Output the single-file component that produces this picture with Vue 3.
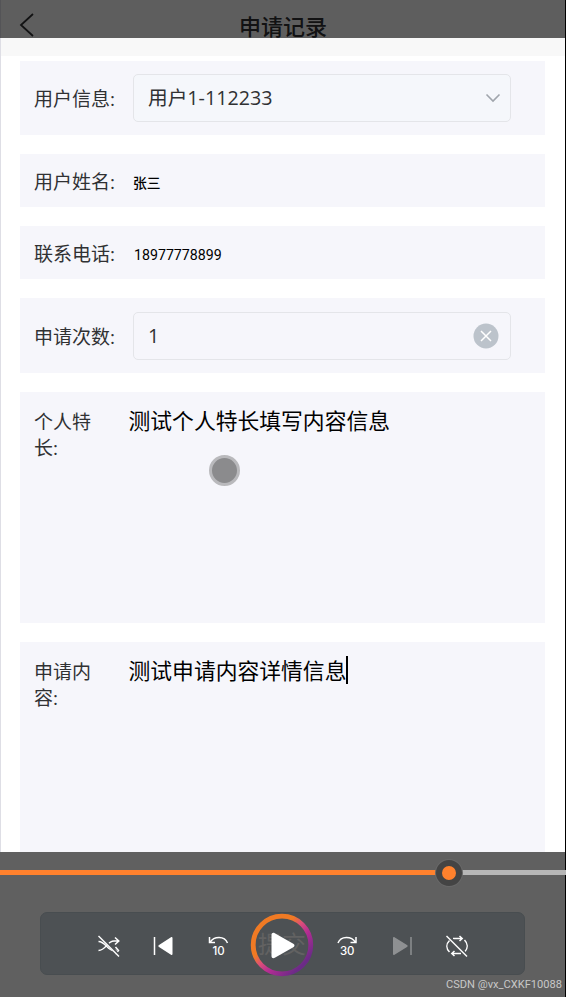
<script setup>
import { ref } from "vue";

const user = ref("用户1-112233");
const count = ref("1");
const speciality = ref("测试个人特长填写内容信息");
const content = ref("测试申请内容详情信息");

const infoRows = [
  { label: "用户姓名:", value: "张三", type: "name" },
  { label: "联系电话:", value: "18977778899", type: "phone" },
];

const progress = ref(79.4);
</script>

<template>
  <div class="screen">
    <div class="page">
      <header class="nav">
        <svg class="nav-back" width="16" height="26" viewBox="0 0 16 26">
          <path d="M14 2 2 13l12 11" />
        </svg>
        <h1 class="nav-title">申请记录</h1>
      </header>

      <main class="form">
        <section class="card card-field">
          <label class="label">用户信息:</label>
          <div class="control control-select">
            <span class="control-text">{{ user }}</span>
            <svg class="arrow" width="16" height="10" viewBox="0 0 16 10">
              <path d="m1.5 1.5 6.5 6.5 6.5-6.5" />
            </svg>
          </div>
        </section>

        <section
          v-for="row in infoRows"
          :key="row.label"
          class="card card-info"
        >
          <label class="label">{{ row.label }}</label>
          <span class="value" :class="`value-${row.type}`">{{
            row.value
          }}</span>
        </section>

        <section class="card card-field card-count">
          <label class="label">申请次数:</label>
          <div class="control">
            <span class="control-text">{{ count }}</span>
            <svg class="clear" width="26" height="26" viewBox="0 0 26 26">
              <circle cx="13" cy="13" r="12.5" />
              <path d="m8 8 10 10M18 8 8 18" />
            </svg>
          </div>
        </section>

        <section class="card card-area">
          <label class="label label-area">个人特长:</label>
          <p class="area-text">{{ speciality }}</p>
        </section>

        <section class="card card-area">
          <label class="label label-area">申请内容:</label>
          <p class="area-text">{{ content }}<i class="caret"></i></p>
        </section>
      </main>
    </div>

    <div class="pointer"></div>
    <div class="shade-top"></div>

    <div class="player">
      <div class="progress">
        <div class="progress-done" :style="{ width: progress + '%' }"></div>
        <div class="progress-knob" :style="{ left: progress + '%' }"></div>
      </div>

      <div class="panel">
        <span class="submit">提交</span>

        <svg class="icon" width="24" height="24" viewBox="0 0 24 24">
          <path
            d="M1.5 7.5c7 0 9 9 15 9h3M1.5 16.5C9 16.5 10 7 17 7h4.5M18 3.5 21.8 7 18 10.5M18.5 13l3 3.5-3 3.5"
          />
          <path d="m3 2 19.5 20" class="gap" />
          <path d="m1.5 2 20.5 20.5" />
        </svg>

        <svg class="icon" width="24" height="24" viewBox="0 0 24 24">
          <path d="M2.5 3v18" />
          <path
            class="solid"
            d="M20.5 4v16c0 1-.8 1.2-1.5.7L7 13c-.9-.6-.9-1.4 0-2L19 3.3c.7-.5 1.5-.3 1.5.7z"
          />
        </svg>

        <svg class="icon icon-skip" width="24" height="24" viewBox="0 0 24 24">
          <path d="M2.5 3v5.5H8M3 8.3C7 2 17.5 1.5 20.5 9" />
          <text x="11.5" y="21">10</text>
        </svg>

        <svg class="play" width="64" height="64" viewBox="0 0 64 64">
          <defs>
            <linearGradient id="ring" x1="0.1" y1="0.1" x2="0.85" y2="0.85">
              <stop offset="0.35" stop-color="#f07a24" />
              <stop offset="0.5" stop-color="#dc4f78" />
              <stop offset="0.68" stop-color="#b42c93" />
              <stop offset="1" stop-color="#6b2b87" />
            </linearGradient>
          </defs>
          <circle cx="32" cy="32" r="28.8" />
          <path
            d="M21.5 22v21c0 2 1.6 2.8 3.3 1.8l18.5-10.5c1.6-1 1.6-2.6 0-3.6L24.8 20.2c-1.7-1-3.3-.2-3.3 1.8z"
          />
        </svg>

        <svg class="icon" width="24" height="24" viewBox="0 0 24 24">
          <path d="M21 3v5.5h-5.5M20.5 8.3C16.5 2 6 1.5 3 9" />
          <text x="12.2" y="21">30</text>
        </svg>

        <svg class="icon icon-off" width="24" height="24" viewBox="0 0 24 24">
          <path d="M21 3v18" />
          <path
            class="solid"
            d="M3 4v16c0 1 .8 1.2 1.5.7L17 13c.9-.6.9-1.4 0-2L4.5 3.3c-.7-.5-1.5-.3-1.5.7z"
          />
        </svg>

        <svg class="icon" width="24" height="24" viewBox="0 0 24 24">
          <path
            d="M8 4.5h9M14.5 2 17.2 4.5 14.5 7M16 19.5H7M9.5 17 6.8 19.5 9.5 22M4.5 6.5C1 10 1 14.5 4.5 18M19.5 6c3.5 3.5 3.5 8 .5 11.5"
          />
          <path d="m3 2 19.5 20" class="gap" />
          <path d="m1.5 2 20.5 20.5" />
        </svg>
      </div>

      <span class="watermark">CSDN @vx_CXKF10088</span>
    </div>
  </div>
</template>

<style>
body {
  background: #fff;
}
</style>

<style scoped>
.screen {
  position: relative;
  width: 566px;
  height: 997px;
  overflow: hidden;
  font-family: "Open Sans", "Noto Sans CJK SC", sans-serif;
  color: #303133;
}

.page {
  box-sizing: border-box;
  height: 100%;
  overflow: hidden;
  border-left: 1px solid #dedee5;
  border-right: 1px solid #000;
  background: #fff;
}

.nav {
  display: flex;
  align-items: center;
  height: 56px;
  padding: 0 18px;
  background: #f8f8f8;
}

.nav-back {
  flex: none;
  margin-top: -7px;
}

.nav-back path {
  fill: none;
  stroke: #303133;
  stroke-width: 1.8;
}

.nav-title {
  flex: 1;
  margin: -4px 16px 0 0;
  font-size: 22px;
  line-height: 30px;
  font-weight: 500;
  text-align: center;
  color: #303133;
}

.form {
  display: flex;
  flex-direction: column;
  gap: 19px;
  padding: 4.5px 20.5px 0 19.4px;
}

.card {
  display: flex;
  align-items: center;
  flex: none;
  box-sizing: border-box;
  padding: 0 34px 0 13.6px;
  background: #f6f6fb;
}

.card-field {
  height: 74.5px;
}

.card-count {
  padding-top: 1px;
}

.card-info {
  height: 53px;
}

.card-area {
  align-items: flex-start;
  height: 231px;
  padding: 17px 14px 0 13.6px;
}

.label {
  flex: none;
  width: 99px;
  font-size: 19px;
  line-height: 26px;
  white-space: nowrap;
}

.card-field .label,
.card-info .label {
  padding-top: 2px;
}

.label-area {
  width: 62px;
  margin-right: 32.5px;
  white-space: normal;
}

.control {
  display: flex;
  flex: 1;
  align-items: center;
  justify-content: space-between;
  box-sizing: border-box;
  height: 48px;
  padding: 0 11px 0 14px;
  border: 1.5px solid #e4e5e9;
  border-radius: 5px;
}

.control-select {
  padding-right: 9px;
  background: #f5f7fb;
}

.control-text {
  font-size: 19.7px;
}

.control-select .control-text {
  margin-top: -3px;
}

.arrow path {
  fill: none;
  stroke: #a0a5ac;
  stroke-width: 1.6;
}

.clear circle {
  fill: #bcc3cb;
}

.clear path {
  stroke: #fff;
  stroke-width: 1.5;
}

.value {
  color: #000;
}

.value-name {
  padding-top: 3px;
  font-size: 13.8px;
  font-weight: 500;
}

.value-phone {
  padding: 5px 0 0 1px;
  font-family: Roboto, sans-serif;
  font-size: 14.2px;
}

.area-text {
  display: flex;
  align-items: center;
  margin: -3px 0 0;
  font-size: 21.8px;
  line-height: 30px;
  white-space: nowrap;
  color: #000;
}

.caret {
  width: 2px;
  height: 28px;
  margin-top: -2px;
  background: #000;
}

.pointer {
  position: absolute;
  top: 455px;
  left: 209px;
  box-sizing: border-box;
  width: 31px;
  height: 31px;
  border: 3px solid #b9b9bc;
  border-radius: 50%;
  background: #8b8b8d;
}

.shade-top {
  position: absolute;
  top: 0;
  left: 0;
  width: 565px;
  height: 38px;
  background: rgba(0, 0, 0, 0.62);
}

.player {
  position: absolute;
  top: 852px;
  left: 0;
  box-sizing: border-box;
  width: 566px;
  height: 145px;
  background: linear-gradient(to left, #000 1px, #606060 1px);
}

.progress {
  position: relative;
  height: 5px;
  margin-top: 18px;
  background: #b7b7b7;
}

.progress-done {
  height: 100%;
  background: #ff812d;
}

.progress-knob {
  position: absolute;
  top: 2.5px;
  box-sizing: border-box;
  width: 26px;
  height: 26px;
  border: 6.5px solid #444;
  border-radius: 50%;
  background: #ff812d;
  box-shadow: 0 0 0 1px #686868;
  transform: translate(-50%, -50%);
}

.panel {
  position: relative;
  display: flex;
  align-items: center;
  box-sizing: border-box;
  width: 485px;
  height: 63px;
  margin: 37px 0 0 40px;
  padding-left: 56px;
  border: 1px solid #484d50;
  border-radius: 7px;
  background: #4d5154;
}

.submit {
  position: absolute;
  top: 14px;
  left: 217px;
  font-size: 24px;
  line-height: 34px;
  color: #626262;
}

.icon {
  flex: none;
  margin-top: 5px;
  margin-right: 31px;
}

.icon-skip {
  margin-right: 19px;
}

.icon path {
  fill: none;
  stroke: #fff;
  stroke-width: 1.5;
}

.icon .gap {
  stroke: #4d5154;
  stroke-width: 3;
}

.icon .solid {
  fill: #fff;
  stroke: none;
}

.icon text {
  fill: #fff;
  font-family: Inter, sans-serif;
  font-size: 11.5px;
  font-weight: 500;
  text-anchor: middle;
}

.icon-off path {
  stroke: #8e9092;
}

.icon-off .solid {
  fill: #8e9092;
}

.play {
  position: relative;
  flex: none;
  margin: 3px 21px 0 0;
}

.play circle {
  fill: none;
  stroke: url(#ring);
  stroke-width: 4.8;
}

.play path {
  fill: #fff;
}

.watermark {
  position: absolute;
  right: 4px;
  bottom: 4px;
  font-family: Roboto, sans-serif;
  font-size: 11.1px;
  line-height: 16px;
  white-space: nowrap;
  color: #c8c8c8;
}
</style>
